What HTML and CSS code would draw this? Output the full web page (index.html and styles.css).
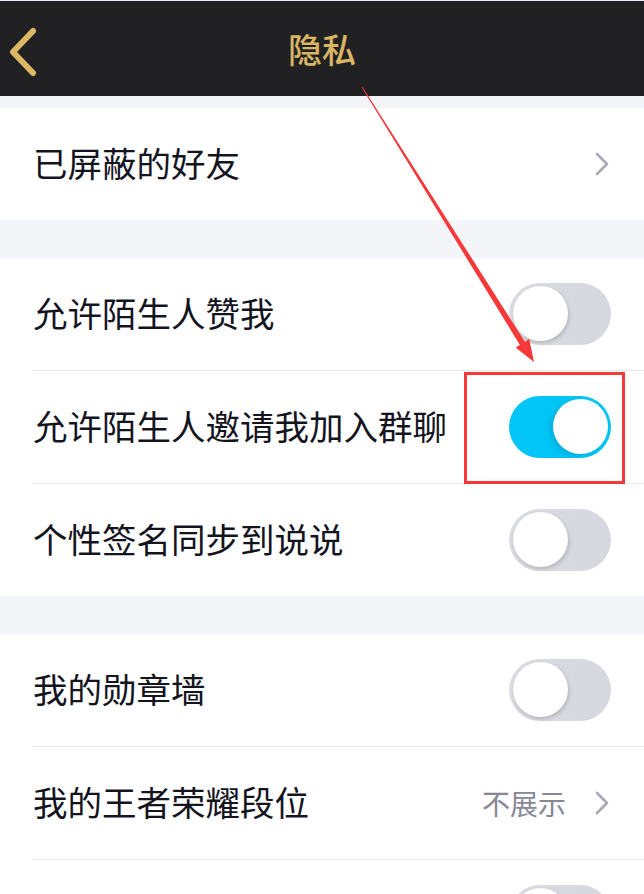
FILE: index.html
```html
<!DOCTYPE html>
<html lang="zh-CN">
  <head>
    <meta charset="UTF-8" />
    <meta name="viewport" content="width=device-width, initial-scale=1.0" />
    <title>隐私</title>
    <link rel="stylesheet" href="styles.css">
  </head>
  <body>
    <div class="screen">
      <header class="nav">
        <svg class="back" width="40" height="60" viewBox="0 0 40 60">
          <path d="M33 12 L13 33 L33 54" fill="none" stroke="#dcb865" stroke-width="6" stroke-linecap="round" stroke-linejoin="round" />
        </svg>
        <h1 class="title">隐私</h1>
      </header>

      <section class="group first">
        <div class="row">
          <div class="row-body">
            <span class="label">已屏蔽的好友</span>
            <svg class="chevron" width="14" height="24" viewBox="0 0 14 24">
              <path d="M2 2 L12 12 L2 22" fill="none" stroke="#a8a8b6" stroke-width="2.6" stroke-linecap="round" stroke-linejoin="round" />
            </svg>
          </div>
        </div>
      </section>

      <section class="group">
        <div class="row">
          <div class="row-body">
            <span class="label">允许陌生人赞我</span>
            <span class="switch"><span class="knob"></span></span>
          </div>
        </div>
        <div class="row">
          <div class="row-body">
            <span class="label">允许陌生人邀请我加入群聊</span>
            <span class="switch on"><span class="knob"></span></span>
          </div>
        </div>
        <div class="row">
          <div class="row-body">
            <span class="label">个性签名同步到说说</span>
            <span class="switch"><span class="knob"></span></span>
          </div>
        </div>
      </section>

      <section class="group">
        <div class="row">
          <div class="row-body">
            <span class="label">我的勋章墙</span>
            <span class="switch"><span class="knob"></span></span>
          </div>
        </div>
        <div class="row">
          <div class="row-body">
            <span class="label">我的王者荣耀段位</span>
            <span class="value">不展示</span>
            <svg class="chevron" width="14" height="24" viewBox="0 0 14 24">
              <path d="M2 2 L12 12 L2 22" fill="none" stroke="#a8a8b6" stroke-width="2.6" stroke-linecap="round" stroke-linejoin="round" />
            </svg>
          </div>
        </div>
        <!-- next row continues below the fold -->
        <div class="row">
          <div class="row-body">
            <span class="label"></span>
            <span class="switch"><span class="knob"></span></span>
          </div>
        </div>
      </section>

      <!-- annotation drawn over the screenshot -->
      <svg class="annotation" width="644" height="894" viewBox="0 0 644 894">
        <polygon points="361.6,87.3 362.4,86.7 524.9,341.7 529.2,339.1 534,362 515.6,347.5 519.9,344.9" fill="#f73838" />
        <rect x="465.5" y="373.5" width="158" height="109" fill="none" stroke="#f73838" stroke-width="3" />
      </svg>
    </div>
  </body>
</html>
```

FILE: styles.css
```css
body {
  margin: 0;
  background-color: #f4f5f9;
  font-family: "Noto Sans CJK SC", "Noto Sans", sans-serif;
  color: #14141f;
}
.screen {
  position: relative;
  width: 644px;
  height: 894px;
  overflow: hidden;
  background-color: #f4f5f9;
}
.nav {
  display: flex;
  align-items: center;
  justify-content: center;
  height: 95px;
  border-top: 1px solid #e8ecf4;
  background-color: #212123;
  position: relative;
}
.back {
  position: absolute;
  left: 0;
  top: 18px;
}
.title {
  margin: 0;
  font-size: 34px;
  font-weight: 500;
  color: #d9b564;
}
.group {
  background: #fff;
  margin-top: 38px;
}
.group.first {
  margin-top: 12px;
}
.row {
  padding-left: 32px;
}
.row-body {
  display: flex;
  align-items: center;
  height: 112px;
  padding-right: 33px;
  border-top: 1px solid #e6e7ef;
}
.row:first-child .row-body {
  border-top: none;
}
.label {
  flex: 1;
  padding-left: 1px;
  padding-bottom: 3px;
  font-size: 34.5px;
  line-height: 1;
}
.value {
  font-size: 28px;
  color: #878796;
  margin-right: 29px;
}
.chevron {
  margin-right: 2px;
}
.switch {
  position: relative;
  width: 102px;
  height: 62px;
  border-radius: 31px;
  background: linear-gradient(90deg, #dcdde3, #d6d7df);
  flex-shrink: 0;
}
.switch .knob {
  position: absolute;
  top: 3px;
  left: 4px;
  width: 55px;
  height: 55px;
  border-radius: 50%;
  background: #fff;
  box-shadow: 1px 2px 4px rgba(0, 0, 0, 0.18);
}
.switch.on {
  background: #00c5f6;
}
.switch.on .knob {
  left: 44px;
  box-shadow: -3px 2px 5px rgba(0, 110, 150, 0.25);
}
.annotation {
  position: absolute;
  left: 0;
  top: 0;
  pointer-events: none;
}
```
